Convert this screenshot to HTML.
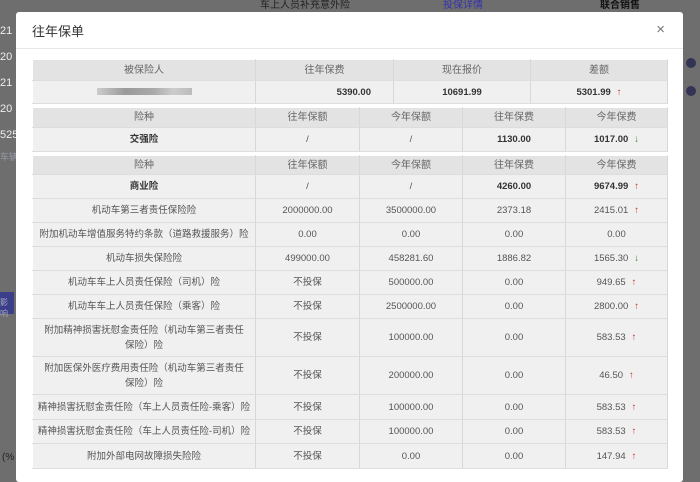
<!DOCTYPE html>
<html><head><meta charset="utf-8"><style>
*{margin:0;padding:0;box-sizing:border-box}
body{width:700px;height:472px;overflow:hidden;background:#6e6e6e;font-family:"Liberation Sans","Noto Sans CJK SC",sans-serif;position:relative}
.bg{position:absolute;color:#222;font-size:11px}
.modal{position:absolute;left:16px;top:12px;width:667px;height:470px;background:#fff;border-radius:3px}
.hd{height:37px;border-bottom:1px solid #e8e8e8;font-size:13px;color:#333;padding:9px 0 0 16px}
.x{position:absolute;right:18px;top:9px;font-size:15px;color:#777;font-weight:300}
table{position:absolute;left:16px;width:635px;border-collapse:collapse;table-layout:fixed;font-size:9.5px;color:#555}
td{border:1px solid #fff;border-right:1px solid #d8d8d8;border-bottom:1px solid #ddd;background:#f0f0f0;text-align:center;vertical-align:middle;line-height:15px}
tr.h td{background:#e3e3e3;color:#666;font-size:10px}
td.b{font-weight:bold;color:#333}
.u{color:#c33;font-weight:normal;margin-left:6px}
.d{color:#3a7a3a;font-weight:normal;margin-left:6px}
</style></head><body>
<div class="bg" style="left:0;top:18px;line-height:26px;color:#eee">21<br>20<br>21<br>20<br>525</div>
<div class="bg" style="left:0;top:150px;color:#99a;font-size:9px">车辆</div>
<div class="bg" style="left:0;top:292px;width:14px;height:22px;background:#3b3f8a;color:#aab;font-size:8px;padding-top:5px">影响</div>
<div class="bg" style="left:2px;top:452px;color:#222;font-size:10px">(%</div>
<div class="bg" style="left:260px;top:-4px;color:#222;font-size:10px">车上人员补充意外险</div>
<div class="bg" style="left:443px;top:-4px;color:#33a;font-size:10px">投保详情</div>
<div class="bg" style="left:600px;top:-4px;color:#111;font-size:10px;font-weight:bold">联合销售</div>
<div class="bg" style="left:686px;top:58px;width:10px;height:10px;border-radius:50%;background:#335"></div>
<div class="bg" style="left:686px;top:86px;width:10px;height:10px;border-radius:50%;background:#335"></div>
<div class="modal">
<div class="hd">往年保单</div><div class="x">×</div>
<table style="top:47px">
<colgroup><col style="width:223px"><col style="width:138px"><col style="width:137px"><col style="width:137px"></colgroup>
<tr class="h" style="height:21px"><td>被保险人</td><td>往年保费</td><td>现在报价</td><td>差额</td></tr>
<tr style="height:23px"><td><span style="display:inline-block;width:95px;height:7px;background:linear-gradient(90deg,#ccc,#999 30%,#aaa 60%,#ccc 80%,#bbb)"></span></td><td class="b" style="text-align:right;padding-right:22px">5390.00</td><td class="b">10691.99</td><td class="b">5301.99<span class="u">↑</span></td></tr>
</table>
<table style="top:95px">
<colgroup><col style="width:223px"><col style="width:104px"><col style="width:103px"><col style="width:103px"><col style="width:102px"></colgroup>
<tr class="h" style="height:20px"><td>险种</td><td>往年保额</td><td>今年保额</td><td>往年保费</td><td>今年保费</td></tr>
<tr style="height:24px"><td class="b">交强险</td><td>/</td><td>/</td><td class="b">1130.00</td><td class="b">1017.00<span class="d">↓</span></td></tr>
</table>
<table style="top:143px">
<colgroup><col style="width:223px"><col style="width:104px"><col style="width:103px"><col style="width:103px"><col style="width:102px"></colgroup>
<tr class="h" style="height:19px"><td>险种</td><td>往年保额</td><td>今年保额</td><td>往年保费</td><td>今年保费</td></tr>
<tr style="height:24px"><td class="b">商业险</td><td>/</td><td>/</td><td class="b">4260.00</td><td class="b">9674.99<span class="u">↑</span></td></tr>
<tr style="height:24px"><td>机动车第三者责任保险险</td><td>2000000.00</td><td>3500000.00</td><td>2373.18</td><td>2415.01<span class="u">↑</span></td></tr>
<tr style="height:24px"><td>附加机动车增值服务特约条款（道路救援服务）险</td><td>0.00</td><td>0.00</td><td>0.00</td><td>0.00</td></tr>
<tr style="height:24px"><td>机动车损失保险险</td><td>499000.00</td><td>458281.60</td><td>1886.82</td><td>1565.30<span class="d">↓</span></td></tr>
<tr style="height:24px"><td>机动车车上人员责任保险（司机）险</td><td>不投保</td><td>500000.00</td><td>0.00</td><td>949.65<span class="u">↑</span></td></tr>
<tr style="height:24px"><td>机动车车上人员责任保险（乘客）险</td><td>不投保</td><td>2500000.00</td><td>0.00</td><td>2800.00<span class="u">↑</span></td></tr>
<tr style="height:38px"><td style="padding:0 8px">附加精神损害抚慰金责任险（机动车第三者责任保险）险</td><td>不投保</td><td>100000.00</td><td>0.00</td><td>583.53<span class="u">↑</span></td></tr>
<tr style="height:38px"><td style="padding:0 8px">附加医保外医疗费用责任险（机动车第三者责任保险）险</td><td>不投保</td><td>200000.00</td><td>0.00</td><td>46.50<span class="u">↑</span></td></tr>
<tr style="height:25px"><td>精神损害抚慰金责任险（车上人员责任险-乘客）险</td><td>不投保</td><td>100000.00</td><td>0.00</td><td>583.53<span class="u">↑</span></td></tr>
<tr style="height:24px"><td>精神损害抚慰金责任险（车上人员责任险-司机）险</td><td>不投保</td><td>100000.00</td><td>0.00</td><td>583.53<span class="u">↑</span></td></tr>
<tr style="height:25px"><td>附加外部电网故障损失险险</td><td>不投保</td><td>0.00</td><td>0.00</td><td>147.94<span class="u">↑</span></td></tr>
</table>
</div>
</body></html>
